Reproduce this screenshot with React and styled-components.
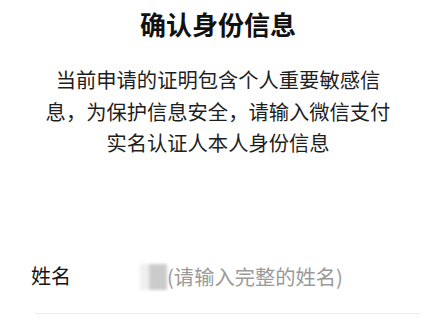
import React from 'react'
import styled, { createGlobalStyle } from 'styled-components'

const GlobalStyle = createGlobalStyle`
  html, body {
    margin: 0;
    padding: 0;
    background: #fff;
  }
  body {
    font-family: "Noto Sans CJK SC", "Noto Sans", sans-serif;
    color: #1a1a1a;
  }
`

const Page = styled.div`
  width: 436px;
  height: 325px;
  overflow: hidden;
  background: #fff;
`

const Title = styled.h1`
  margin: 7px 0 0;
  font-size: 26px;
  line-height: 34px;
  font-weight: 700;
  text-align: center;
  color: #111;
`

const Notice = styled.p`
  margin: 23px 0 0;
  font-size: 20.3px;
  line-height: 31.5px;
  text-align: center;
  color: #1e1e1e;
`

const Line = styled.span`
  display: block;
  white-space: nowrap;
`

const Field = styled.div`
  margin-top: 92px;
  display: flex;
  align-items: center;
  height: 50px;
  padding-left: 31px;
`

const Label = styled.span`
  width: 109px;
  font-size: 20px;
  color: #151515;
`

const Masked = styled.span`
  position: relative;
  width: 27px;
  height: 26px;
  margin-top: 2px;
  filter: blur(1.5px);
  background: linear-gradient(90deg, #eeeeee 0 30%, #c6c6c6 38% 100%);
  opacity: 0.9;
`

const Placeholder = styled.span`
  font-size: 20.3px;
  color: #9a9a9a;
`

const Divider = styled.div`
  margin: 12px 16px 0 35px;
  border-bottom: 1px solid #ececec;
`

export default function App() {
  return (
    <Page>
      <GlobalStyle />
      <Title>确认身份信息</Title>
      <Notice>
        <Line>当前申请的证明包含个人重要敏感信</Line>
        <Line>息，为保护信息安全，请输入微信支付</Line>
        <Line>实名认证人本人身份信息</Line>
      </Notice>
      <Field>
        <Label>姓名</Label>
        <Masked />
        <Placeholder>(请输入完整的姓名)</Placeholder>
      </Field>
      <Divider />
    </Page>
  )
}
